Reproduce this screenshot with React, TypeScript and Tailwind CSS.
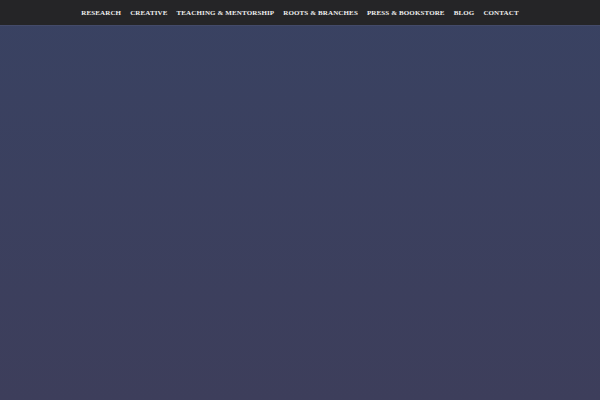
const links = ['Research', 'Creative', 'Teaching & Mentorship', 'Roots & Branches', 'Press & Bookstore', 'Blog', 'Contact'];

const App = () => {
  return (
    <div className="flex h-[400px] w-[600px] flex-col bg-gradient-to-b from-[#394262] to-[#3d3e5b]">
      <nav className="flex h-[26px] items-center justify-center gap-[9px] border-b border-[#444b69] bg-[#252527] pt-px">
        {links.map((link) => (
          <a
            key={link}
            href="#"
            className="font-['Liberation_Serif',serif] text-[7px] font-bold uppercase leading-none tracking-[0.12px] text-[#eeeeee]"
          >
            {link}
          </a>
        ))}
      </nav>
      <main className="flex-1" />
    </div>
  );
};

export default App;
